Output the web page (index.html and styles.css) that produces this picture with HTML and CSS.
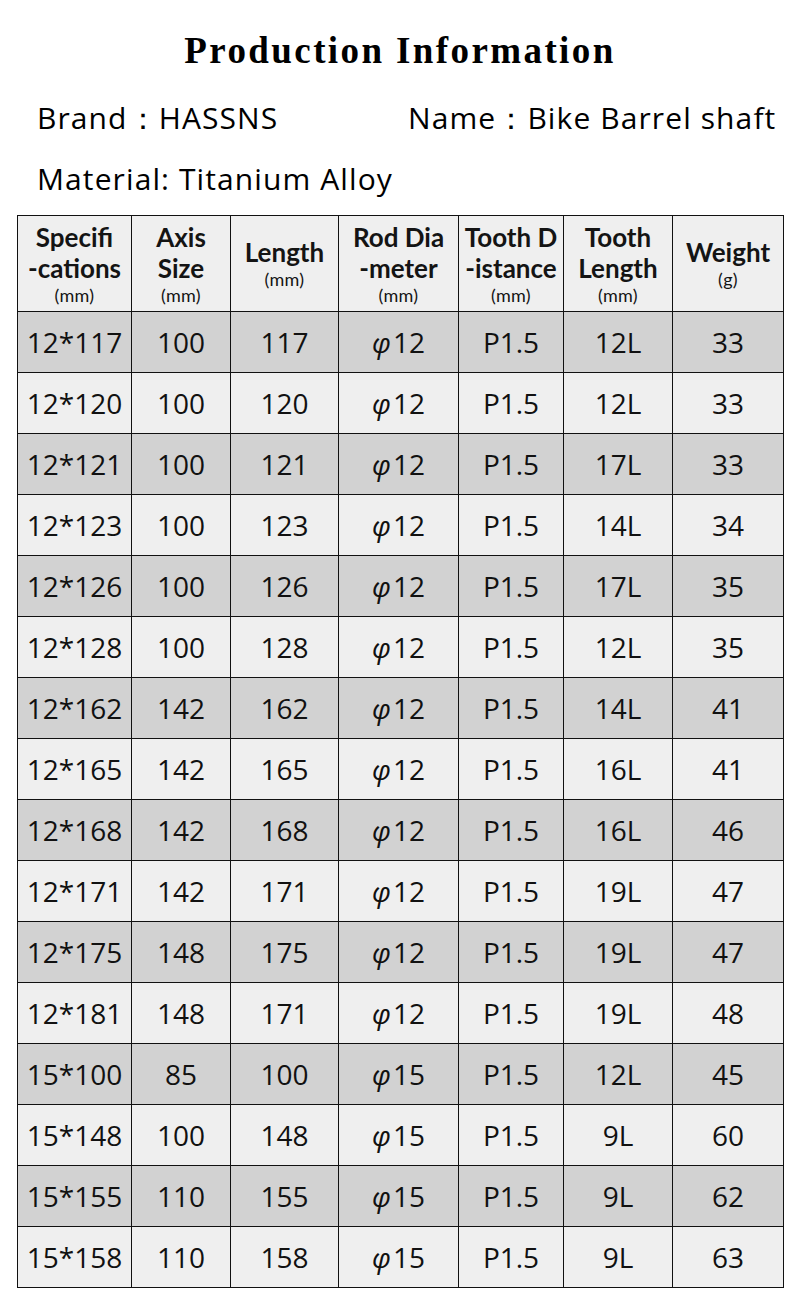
FILE: index.html
```html
<!DOCTYPE html>
<html>
<head>
<meta charset="utf-8">
<link rel="stylesheet" href="styles.css">
</head>
<body>
<div class="page">
  <h1 class="title">Production Information</h1>
  <div class="info">
    <div class="info-row">
      <span class="brand">Brand：HASSNS</span>
      <span class="name">Name：Bike Barrel shaft</span>
    </div>
    <div class="info-row">
      <span>Material: Titanium Alloy</span>
    </div>
  </div>
  <table class="spec">
    <colgroup>
      <col class="c1"><col class="c2"><col class="c3"><col class="c4"><col class="c5"><col class="c6"><col class="c7">
    </colgroup>
    <thead>
      <tr>
        <th><span class="h">Specifi</span><span class="h">-cations</span><span class="u">(mm)</span></th>
        <th><span class="h">Axis</span><span class="h">Size</span><span class="u">(mm)</span></th>
        <th><span class="h">Length</span><span class="u">(mm)</span></th>
        <th><span class="h">Rod Dia</span><span class="h">-meter</span><span class="u">(mm)</span></th>
        <th><span class="h">Tooth D</span><span class="h">-istance</span><span class="u">(mm)</span></th>
        <th><span class="h">Tooth</span><span class="h">Length</span><span class="u">(mm)</span></th>
        <th><span class="h">Weight</span><span class="u">(g)</span></th>
      </tr>
    </thead>
    <tbody>
      <tr class="dark"><td>12*117</td><td>100</td><td>117</td><td><span class="phi">φ</span>12</td><td>P1.5</td><td>12L</td><td>33</td></tr>
      <tr><td>12*120</td><td>100</td><td>120</td><td><span class="phi">φ</span>12</td><td>P1.5</td><td>12L</td><td>33</td></tr>
      <tr class="dark"><td>12*121</td><td>100</td><td>121</td><td><span class="phi">φ</span>12</td><td>P1.5</td><td>17L</td><td>33</td></tr>
      <tr><td>12*123</td><td>100</td><td>123</td><td><span class="phi">φ</span>12</td><td>P1.5</td><td>14L</td><td>34</td></tr>
      <tr class="dark"><td>12*126</td><td>100</td><td>126</td><td><span class="phi">φ</span>12</td><td>P1.5</td><td>17L</td><td>35</td></tr>
      <tr><td>12*128</td><td>100</td><td>128</td><td><span class="phi">φ</span>12</td><td>P1.5</td><td>12L</td><td>35</td></tr>
      <tr class="dark"><td>12*162</td><td>142</td><td>162</td><td><span class="phi">φ</span>12</td><td>P1.5</td><td>14L</td><td>41</td></tr>
      <tr><td>12*165</td><td>142</td><td>165</td><td><span class="phi">φ</span>12</td><td>P1.5</td><td>16L</td><td>41</td></tr>
      <tr class="dark"><td>12*168</td><td>142</td><td>168</td><td><span class="phi">φ</span>12</td><td>P1.5</td><td>16L</td><td>46</td></tr>
      <tr><td>12*171</td><td>142</td><td>171</td><td><span class="phi">φ</span>12</td><td>P1.5</td><td>19L</td><td>47</td></tr>
      <tr class="dark"><td>12*175</td><td>148</td><td>175</td><td><span class="phi">φ</span>12</td><td>P1.5</td><td>19L</td><td>47</td></tr>
      <tr><td>12*181</td><td>148</td><td>171</td><td><span class="phi">φ</span>12</td><td>P1.5</td><td>19L</td><td>48</td></tr>
      <tr class="dark"><td>15*100</td><td>85</td><td>100</td><td><span class="phi">φ</span>15</td><td>P1.5</td><td>12L</td><td>45</td></tr>
      <tr><td>15*148</td><td>100</td><td>148</td><td><span class="phi">φ</span>15</td><td>P1.5</td><td>9L</td><td>60</td></tr>
      <tr class="dark"><td>15*155</td><td>110</td><td>155</td><td><span class="phi">φ</span>15</td><td>P1.5</td><td>9L</td><td>62</td></tr>
      <tr><td>15*158</td><td>110</td><td>158</td><td><span class="phi">φ</span>15</td><td>P1.5</td><td>9L</td><td>63</td></tr>
    </tbody>
  </table>
</div>
</body>
</html>
```

FILE: styles.css
```css
html, body {
  margin: 0;
  padding: 0;
  background: #ffffff;
}

.page {
  width: 800px;
  color: #111111;
  font-family: "Open Sans", "Liberation Sans", sans-serif;
}

.title {
  margin: 0;
  padding-top: 28px;
  height: 50px;
  line-height: 46px;
  text-align: center;
  font-family: "Liberation Serif", serif;
  font-weight: bold;
  font-size: 37px;
  letter-spacing: 2.4px;
  color: #000;
}

.info {
  padding-left: 37px;
  font-size: 30px;
  letter-spacing: 1.1px;
  color: #000;
}

.info-row {
  display: flex;
  height: 60px;
  align-items: center;
}

.info-row:first-child {
  margin-top: 10px;
}

.brand {
  width: 371px;
}

.spec {
  margin-left: 17px;
  margin-top: 7px;
  border-collapse: collapse;
  table-layout: fixed;
  width: 767px;
}

.c1 { width: 114px; }
.c2 { width: 99px; }
.c3 { width: 108px; }
.c4 { width: 120px; }
.c5 { width: 105px; }
.c6 { width: 109px; }
.c7 { width: 111px; }

.spec th, .spec td {
  border: 1px solid #111;
  text-align: center;
  padding: 0;
  white-space: nowrap;
  overflow: hidden;
}

.spec th {
  background: #efefef;
  height: 95px;
  vertical-align: middle;
  font-family: "Lato", "Open Sans", sans-serif;
  font-weight: 700;
  color: #141414;
}

.h {
  display: block;
  font-size: 26px;
  line-height: 31px;
}

.u {
  display: block;
  font-size: 18px;
  line-height: 22px;
  font-weight: 400;
  letter-spacing: 0.3px;
}

.spec td {
  height: 60px;
  font-size: 28px;
  background: #efefef;
}

.spec tr.dark td {
  background: #d2d2d2;
}

.phi {
  font-style: italic;
  margin-right: 2px;
}
```
